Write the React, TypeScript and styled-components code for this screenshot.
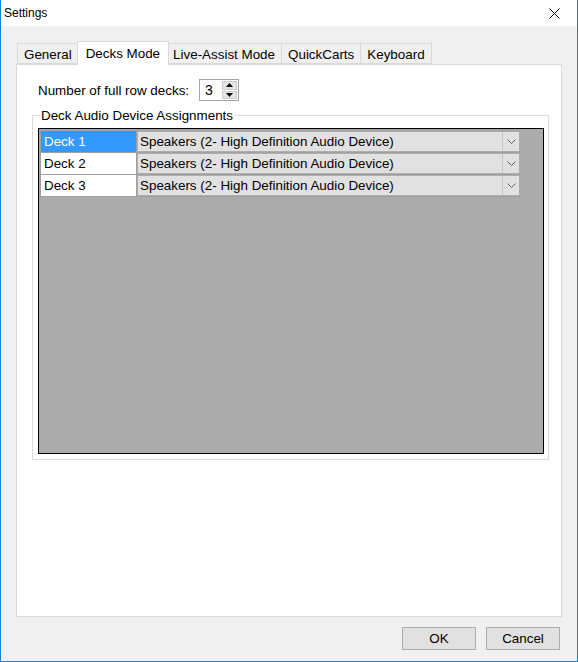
import React from 'react';
import styled, { createGlobalStyle } from 'styled-components';

const GlobalStyle = createGlobalStyle`
    html, body {
        margin: 0;
        padding: 0;
        width: 578px;
        height: 662px;
        overflow: hidden;
        background: #ffffff;
    }
    * {
        box-sizing: border-box;
    }
`;

const Window = styled.div`
    width: 578px;
    height: 662px;
    display: flex;
    flex-direction: column;
    background: #f0f0f0;
    border: 1px solid #1883d7;
    border-top: none;
    font-family: "Liberation Sans", Arial, sans-serif;
    font-size: 13.4px;
    color: #000000;
`;

const TitleBar = styled.div`
    height: 26px;
    flex: 0 0 26px;
    display: flex;
    align-items: center;
    justify-content: space-between;
    background: #ffffff;
    padding-left: 3px;
    font-size: 12px;
`;

const CloseButton = styled.div`
    width: 46px;
    height: 26px;
    display: flex;
    align-items: center;
    justify-content: center;
`;

const Body = styled.div`
    flex: 1;
    display: flex;
    flex-direction: column;
    padding: 15px 15px 12px 15px;
`;

const TabStrip = styled.div`
    height: 23px;
    display: flex;
    align-items: flex-end;
    padding-left: 2px;
`;

const Tab = styled.div<{ active?: boolean }>`
    position: relative;
    height: ${p => (p.active ? '24px' : '21px')};
    margin: ${p => (p.active ? '0 -2px -1px -2px' : '0')};
    padding: ${p => (p.active ? '0 8px' : '0 6px')};
    z-index: ${p => (p.active ? 2 : 1)};
    display: flex;
    align-items: center;
    padding-top: ${p => (p.active ? '0' : '2px')};
    background: ${p => (p.active ? '#ffffff' : '#f0f0f0')};
    border: 1px solid #d9d9d9;
    border-bottom: ${p => (p.active ? 'none' : '1px solid #d9d9d9')};
    margin-left: ${p => (p.active ? '-2px' : '-1px')};
    white-space: nowrap;
`;

const TabPanel = styled.div`
    height: 553px;
    background: #ffffff;
    border: 1px solid #d9d9d9;
    padding: 14px 12px 0 15px;
    display: flex;
    flex-direction: column;
`;

const CountRow = styled.div`
    display: flex;
    align-items: center;
    padding-left: 6px;
    height: 22px;
`;

const CountLabel = styled.span`
    width: 161px;
`;

const SpinBox = styled.div`
    width: 40px;
    height: 22px;
    display: flex;
    border: 1px solid #a5a5a5;
    background: #ffffff;
`;

const SpinValue = styled.div`
    flex: 1;
    display: flex;
    align-items: center;
    padding-left: 5px;
    font-size: 14px;
`;

const SpinButtons = styled.div`
    width: 16px;
    display: flex;
    flex-direction: column;
    padding: 1px 1px 1px 0;
    gap: 1px;
`;

const SpinButton = styled.div`
    flex: 1;
    display: flex;
    align-items: center;
    justify-content: center;
    background: #e5e5e5;
    border: 1px solid #cccccc;
`;

const GroupBox = styled.fieldset`
    margin: 7px 0 0 0;
    padding: 5px 4px 4px 5px;
    height: 352px;
    border: 1px solid #dcdcdc;
    border-radius: 0;
`;

const GroupLegend = styled.legend`
    margin-left: 2px;
    padding: 0 2px 0 1px;
    line-height: 15px;
`;

const Grid = styled.div`
    height: 326px;
    background: #ababab;
    border: 1px solid #000000;
    padding: 1px 0 0 1px;
`;

const GridRows = styled.div`
    display: grid;
    grid-template-columns: 95px 383px;
    grid-auto-rows: 21px;
    gap: 1px;
    width: max-content;
    background: #a0a0a0;
    padding: 1px 0 1px 1px;
`;

const NameCell = styled.div<{ selected?: boolean }>`
    display: flex;
    align-items: center;
    padding-left: 3px;
    background: ${p => (p.selected ? '#3399ff' : '#ffffff')};
    color: ${p => (p.selected ? '#ffffff' : '#000000')};
`;

const ComboCell = styled.div`
    display: flex;
    background: #e1e1e1;
    border: 1px solid #adadad;
`;

const ComboText = styled.div`
    flex: 1;
    display: flex;
    align-items: center;
    padding-left: 2px;
    white-space: nowrap;
`;

const ComboArrow = styled.div`
    width: 17px;
    display: flex;
    align-items: center;
    justify-content: center;
    border-left: 1px solid #c4c4c4;
`;

const ButtonRow = styled.div`
    display: flex;
    justify-content: flex-end;
    gap: 10px;
    margin-top: 10px;
    padding-right: 2px;
`;

const DialogButton = styled.button`
    width: 74px;
    height: 23px;
    background: #e1e1e1;
    border: 1px solid #adadad;
    font-family: "Liberation Sans", Arial, sans-serif;
    font-size: 13.4px;
    color: #000000;
    padding: 0;
`;

const CloseIcon = () => (
    <svg width="11" height="11" viewBox="0 0 11 11">
        <path d="M0.5 0.5 L10.5 10.5 M10.5 0.5 L0.5 10.5" stroke="#000" strokeWidth="1" fill="none" />
    </svg>
);

const ArrowUp = () => (
    <svg width="7" height="4" viewBox="0 0 7 4">
        <path d="M3.5 0 L7 4 L0 4 Z" fill="#000" />
    </svg>
);

const ArrowDown = () => (
    <svg width="7" height="4" viewBox="0 0 7 4">
        <path d="M0 0 L7 0 L3.5 4 Z" fill="#000" />
    </svg>
);

const Chevron = () => (
    <svg width="9" height="5" viewBox="0 0 9 5">
        <path d="M0.5 0.5 L4.5 4.5 L8.5 0.5" stroke="#606060" strokeWidth="1" fill="none" />
    </svg>
);

const tabs = ['General', 'Decks Mode', 'Live-Assist Mode', 'QuickCarts', 'Keyboard'];
const decks = ['Deck 1', 'Deck 2', 'Deck 3'];
const device = 'Speakers (2- High Definition Audio Device)';

export default function App() {
    return (
        <>
            <GlobalStyle />
            <Window>
                <TitleBar>
                    <span>Settings</span>
                    <CloseButton>
                        <CloseIcon />
                    </CloseButton>
                </TitleBar>
                <Body>
                    <TabStrip>
                        {tabs.map(t => (
                            <Tab key={t} active={t === 'Decks Mode'}>{t}</Tab>
                        ))}
                    </TabStrip>
                    <TabPanel>
                        <CountRow>
                            <CountLabel>Number of full row decks:</CountLabel>
                            <SpinBox>
                                <SpinValue>3</SpinValue>
                                <SpinButtons>
                                    <SpinButton><ArrowUp /></SpinButton>
                                    <SpinButton><ArrowDown /></SpinButton>
                                </SpinButtons>
                            </SpinBox>
                        </CountRow>
                        <GroupBox>
                            <GroupLegend>Deck Audio Device Assignments</GroupLegend>
                            <Grid>
                                <GridRows>
                                    {decks.map((d, i) => (
                                        <React.Fragment key={d}>
                                            <NameCell selected={i === 0}>{d}</NameCell>
                                            <ComboCell>
                                                <ComboText>{device}</ComboText>
                                                <ComboArrow><Chevron /></ComboArrow>
                                            </ComboCell>
                                        </React.Fragment>
                                    ))}
                                </GridRows>
                            </Grid>
                        </GroupBox>
                    </TabPanel>
                    <ButtonRow>
                        <DialogButton>OK</DialogButton>
                        <DialogButton>Cancel</DialogButton>
                    </ButtonRow>
                </Body>
            </Window>
        </>
    );
}
